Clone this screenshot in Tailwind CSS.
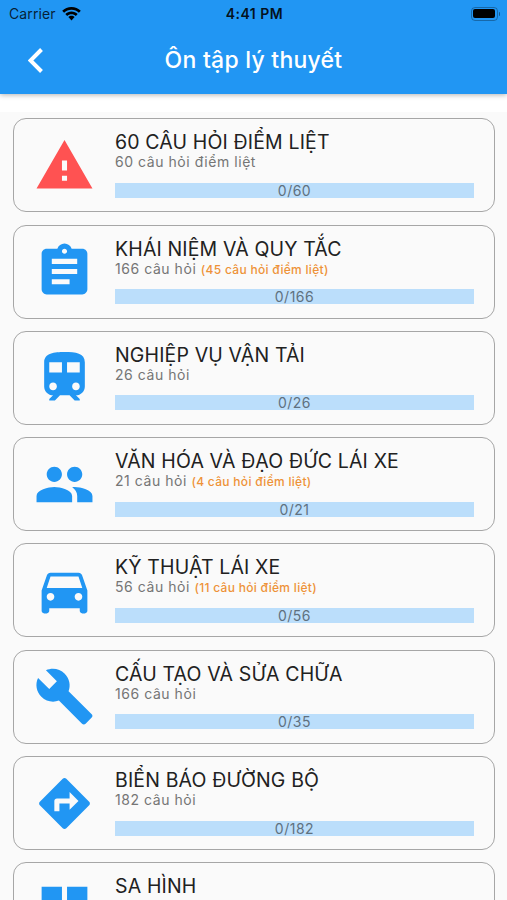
<!DOCTYPE html>
<html lang="vi">
<head>
  <meta charset="UTF-8">
  <meta name="viewport" content="width=device-width, initial-scale=1">
  <title>Ôn tập lý thuyết</title>
  <script src="https://cdn.jsdelivr.net/npm/@tailwindcss/browser@4"></script>
</head>
<body class="h-[900px] overflow-hidden bg-[#fafafa] font-['Inter','Liberation_Sans',sans-serif]">
  <!-- Header -->
  <header class="relative z-10 h-[94px] bg-[#2196f3] shadow-[0_1px_5px_rgba(0,0,0,0.3)]">
    <!-- Status bar -->
    <div class="grid h-[27px] grid-cols-3 items-center pl-[9px] pr-[7px] text-black/80">
      <div class="flex items-center gap-[6px]">
        <span class="text-[14px] tracking-[0.1px]">Carrier</span>
        <svg class="h-[14px] w-[19px] fill-black" viewBox="0 0 19 14">
          <path d="M9.500 0C5.900 0 2.600 1.400.2 3.700l1.900 2C4 3.900 6.600 2.800 9.500 2.800s5.500 1.100 7.400 2.900l1.900-2C16.400 1.400 13.100 0 9.500 0z"/>
          <path d="M9.500 4.400c-2.400 0-4.600.9-6.200 2.500l1.900 2c1.100-1.100 2.600-1.700 4.300-1.700s3.200.6 4.300 1.700l1.900-2c-1.600-1.600-3.800-2.500-6.200-2.500z"/>
          <path d="M9.500 8.800c-1.200 0-2.300.5-3.100 1.300l3.100 3.300 3.100-3.300c-.8-.8-1.900-1.300-3.100-1.300z"/>
        </svg>
      </div>
      <div class="text-center text-[14px] font-semibold tracking-[0.5px] text-black/90">4:41 PM</div>
      <div class="flex items-center justify-end gap-px">
        <div class="h-[14px] w-[27px] rounded-[4px] border border-black/30 p-[1.5px]">
          <div class="h-full w-full rounded-[2px] bg-black"></div>
        </div>
        <div class="h-[4px] w-[1.5px] rounded-r bg-black/40"></div>
      </div>
    </div>
    <!-- Title bar -->
    <div class="grid h-[66px] grid-cols-[70px_1fr_70px] items-center">
      <svg class="ml-[28px] h-[25px] w-[16px] fill-none stroke-white stroke-[4]" viewBox="0 0 16 25">
        <path d="M13.500 1.500L2.500 12.500l11 11"/>
      </svg>
      <h1 class="text-center text-[23px] font-medium tracking-[0.25px] whitespace-nowrap text-white">Ôn tập lý thuyết</h1>
    </div>
  </header>
  <div class="h-[18px] bg-white"></div>

  <!-- Topics -->
  <main id="topics" class="flex flex-col gap-[12.3px] pt-[6.300px] pr-[12px] pl-[13px]"></main>

  <script>
    const icons = {
      warning: 'M1 21h22L12 2 1 21zm12-3h-2v-2h2v2zm0-4h-2v-4h2v4z',
      assignment: 'M19 3h-4.180C14.400 1.840 13.300 1 12 1c-1.300 0-2.400.84-2.820 2H5c-1.100 0-2 .9-2 2v14c0 1.100.9 2 2 2h14c1.100 0 2-.9 2-2V5c0-1.100-.9-2-2-2zm-7 0c.55 0 1 .45 1 1s-.45 1-1 1-1-.45-1-1 .45-1 1-1zm2 14H7v-2h7v2zm3-4H7v-2h10v2zm0-4H7V7h10v2z',
      train: 'M12 2c-4 0-8 .5-8 4v9.500C4 17.430 5.570 19 7.500 19L6 20.500v.5h2.230l2-2H14l2 2h2v-.5L16.500 19c1.930 0 3.500-1.570 3.500-3.500V6c0-3.500-3.580-4-8-4zM7.500 17c-.83 0-1.500-.67-1.500-1.500S6.670 14 7.500 14s1.500.67 1.500 1.500S8.330 17 7.500 17zm3.500-7H6V6h5v4zm2 0V6h5v4h-5zm3.500 7c-.83 0-1.500-.67-1.500-1.500s.67-1.500 1.500-1.500 1.500.67 1.500 1.500-.67 1.500-1.500 1.500z',
      people: 'M16 11c1.660 0 2.990-1.340 2.990-3S17.660 5 16 5c-1.660 0-3 1.340-3 3s1.340 3 3 3zm-8 0c1.660 0 2.990-1.340 2.990-3S9.660 5 8 5C6.340 5 5 6.340 5 8s1.340 3 3 3zm0 2c-2.330 0-7 1.170-7 3.500V19h14v-2.500c0-2.330-4.670-3.500-7-3.500zm8 0c-.29 0-.62.02-.97.05 1.160.84 1.970 1.970 1.970 3.450V19h6v-2.500c0-2.330-4.670-3.500-7-3.500z',
      car: 'M18.920 6.010C18.720 5.420 18.160 5 17.500 5h-11c-.66 0-1.210.42-1.420 1.010L3 12v8c0 .55.45 1 1 1h1c.55 0 1-.45 1-1v-1h12v1c0 .55.45 1 1 1h1c.55 0 1-.45 1-1v-8l-2.080-5.990zM6.500 16c-.83 0-1.500-.67-1.500-1.500S5.670 13 6.500 13s1.500.67 1.500 1.500S7.330 16 6.500 16zm11 0c-.83 0-1.500-.67-1.500-1.500s.67-1.500 1.500-1.500 1.500.67 1.500 1.500-.67 1.500-1.500 1.500zM5 11l1.500-4.500h11L19 11H5z',
      build: 'M22.700 19l-9.100-9.100c.9-2.300.4-5-1.500-6.900-2-2-5-2.400-7.400-1.300L9 6 6 9 1.600 4.700C.4 7.100.9 10.100 2.900 12.100c1.900 1.900 4.600 2.400 6.900 1.500l9.100 9.100c.4.4 1 .4 1.400 0l2.300-2.300c.5-.4.5-1.100.1-1.400z',
      directions: 'M21.710 11.290l-9-9c-.39-.39-1.020-.39-1.410 0l-9 9c-.39.39-.39 1.020 0 1.410l9 9c.39.39 1.020.39 1.410 0l9-9c.39-.38.39-1.010 0-1.410zM14 14.500V12h-4v3H8v-4c0-.55.45-1 1-1h5V7.500l3.500 3.500-3.500 3.500z',
      grid: 'M3 3h8v8H3zM13 3h8v8h-8zM3 13h8v8H3zM13 13h8v8h-8z'
    };

    const topics = [
      { icon: 'warning', title: '60 CÂU HỎI ĐIỂM LIỆT', sub: '60 câu hỏi điểm liệt', total: 60 },
      { icon: 'assignment', title: 'KHÁI NIỆM VÀ QUY TẮC', sub: '166 câu hỏi', note: '(45 câu hỏi điểm liệt)', total: 166 },
      { icon: 'train', title: 'NGHIỆP VỤ VẬN TẢI', sub: '26 câu hỏi', total: 26 },
      { icon: 'people', title: 'VĂN HÓA VÀ ĐẠO ĐỨC LÁI XE', sub: '21 câu hỏi', note: '(4 câu hỏi điểm liệt)', total: 21 },
      { icon: 'car', title: 'KỸ THUẬT LÁI XE', sub: '56 câu hỏi', note: '(11 câu hỏi điểm liệt)', total: 56 },
      { icon: 'build', title: 'CẤU TẠO VÀ SỬA CHỮA', sub: '166 câu hỏi', total: 35 },
      { icon: 'directions', title: 'BIỂN BÁO ĐƯỜNG BỘ', sub: '182 câu hỏi', total: 182 },
      { icon: 'grid', title: 'SA HÌNH', sub: '35 câu hỏi', total: 35 }
    ];

    document.getElementById('topics').innerHTML = topics.map(t => `
      <section class="flex h-[94px] shrink-0 items-center rounded-[13px] border border-[#a6a6a6] pl-[20px] pr-[20px]">
        <svg class="h-[61px] w-[61px] shrink-0 ${t.icon === 'warning' ? 'fill-[#ff5252]' : 'fill-[#2196f3]'}" viewBox="0 0 24 24">
          <path d="${icons[t.icon]}"/>
        </svg>
        <div class="ml-[20px] flex h-full flex-1 flex-col pt-[11px]">
          <h2 class="text-[19.5px] leading-[24px] tracking-[0.15px] whitespace-nowrap text-[#212121]">${t.title}</h2>
          <p class="-mt-px h-[17px] text-[14px] leading-[17px] tracking-[0.55px] whitespace-nowrap text-[#757575]">${t.sub}${t.note ? ` <span class="text-[12px] font-medium tracking-[0.3px] text-[#ee9238]">${t.note}</span>` : ''}</p>
          <div class="mt-[12.500px] h-[15px] bg-[#bbdefb] text-center text-[14px] leading-[16px] tracking-[0.5px] text-[#5f7180]">0/${t.total}</div>
        </div>
      </section>`).join('');
  </script>
</body>
</html>
